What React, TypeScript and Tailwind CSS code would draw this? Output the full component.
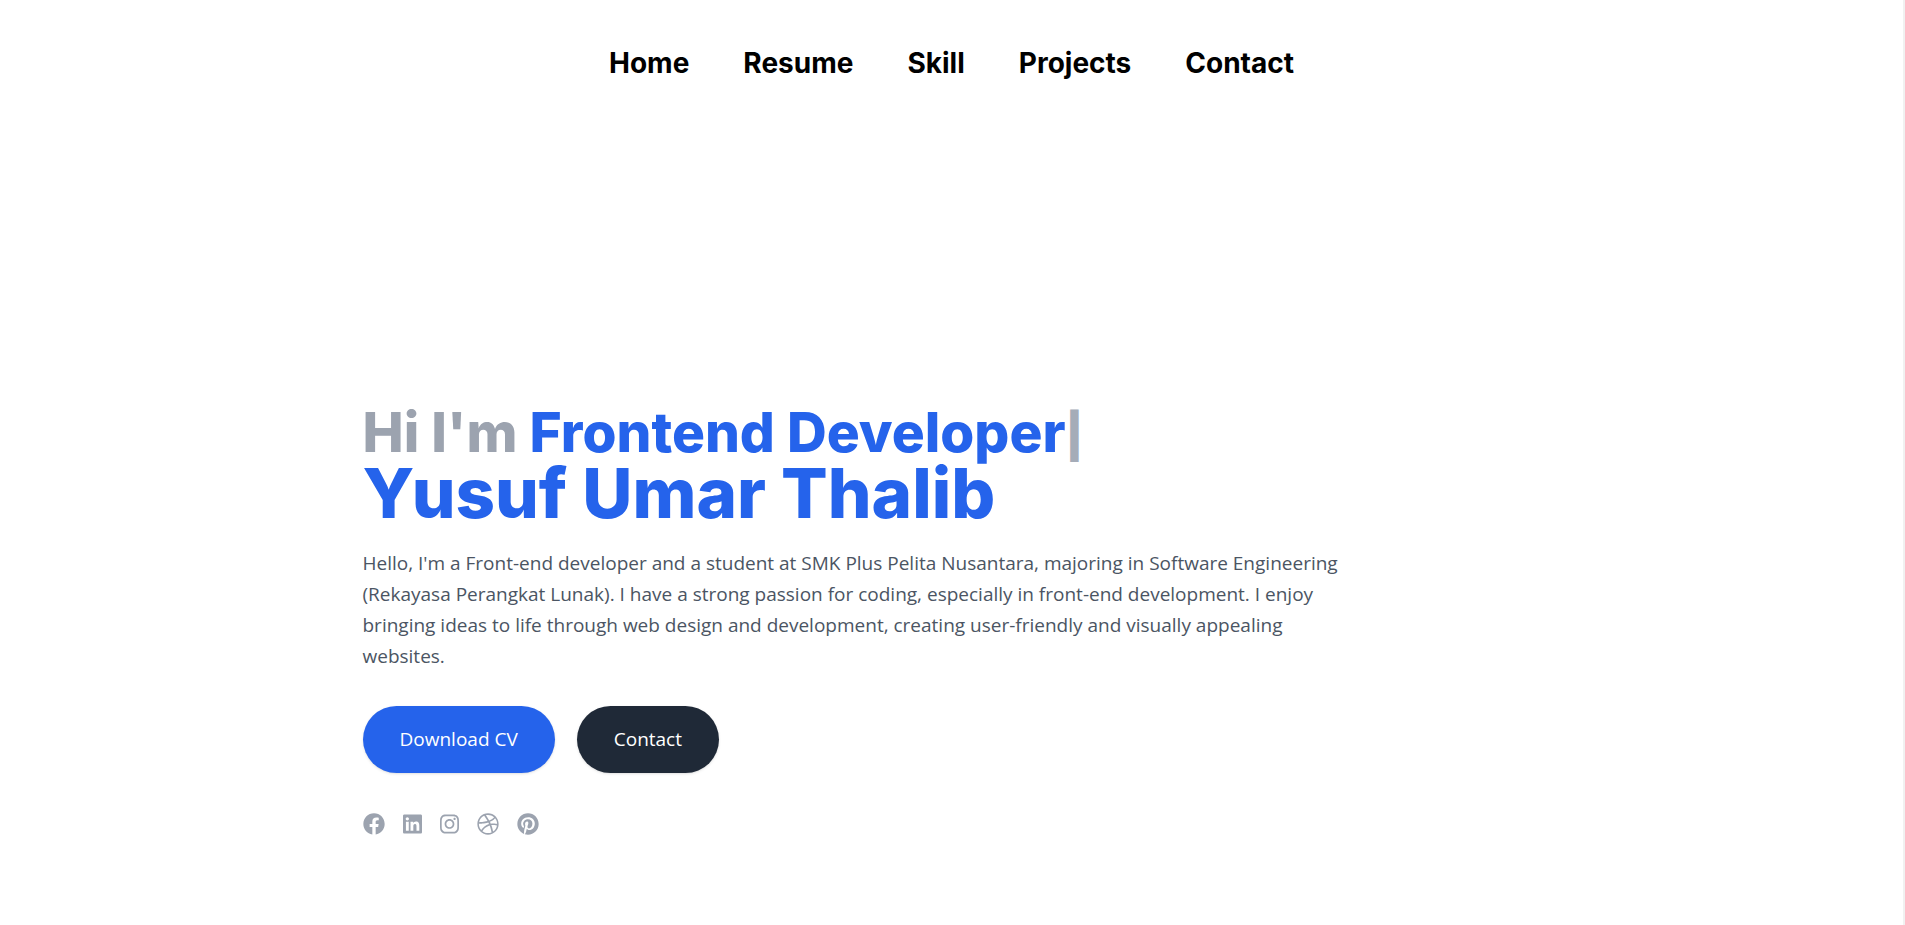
import { FaFacebook, FaLinkedin, FaInstagram, FaDribbble, FaPinterest } from "react-icons/fa";

const links = ["Home", "Resume", "Skill", "Projects", "Contact"];

const socials = [
  { label: "Facebook", Icon: FaFacebook, size: "h-[22px] w-[22px]" },
  { label: "LinkedIn", Icon: FaLinkedin, size: "h-[22px] w-[19px]" },
  { label: "Instagram", Icon: FaInstagram, size: "h-[22px] w-[19px]" },
  { label: "Dribbble", Icon: FaDribbble, size: "h-[22px] w-[22px]" },
  { label: "Pinterest", Icon: FaPinterest, size: "h-[22px] w-[22px]" },
];

export default function App() {
  return (
    <div className="min-h-screen border-r-2 border-[#f1f1f1] bg-white font-['Open_Sans','Noto_Sans',sans-serif]">
      <header className="flex justify-center pt-[45px]">
        <nav aria-label="Main">
          <ul className="flex gap-[54px] font-['Inter',sans-serif] text-[28px] leading-9 font-bold text-black">
            {links.map((link) => (
              <li key={link}>
                <a href={`#${link.toLowerCase()}`}>{link}</a>
              </li>
            ))}
          </ul>
        </nav>
      </header>

      <main className="mx-auto max-w-[1178px] pt-[321px] pb-16">
        <h1 className="font-['Inter',sans-serif] font-extrabold text-[#2563eb]">
          <span className="block text-[55px] leading-[60px]">
            <span className="text-[#9ca3af]">Hi I'm </span>
            Frontend Developer
            <span className="text-[44px] leading-none font-black text-[#a5acb8]">|</span>
          </span>
          <span className="block text-[69px] leading-[62px]">Yusuf Umar Thalib</span>
        </h1>

        <p className="mt-6 max-w-[996px] text-[19px] leading-[31px] text-[#4b5563]">
          Hello, I'm a Front-end developer and a student at SMK Plus Pelita Nusantara, majoring in
          Software Engineering (Rekayasa Perangkat Lunak). I have a strong passion for coding,
          especially in front-end development. I enjoy bringing ideas to life through web design and
          development, creating user-friendly and visually appealing websites.
        </p>

        <div className="mt-[34px] flex gap-[22px] text-[19px] leading-[31px] text-white">
          <a href="#cv" className="rounded-full bg-[#2563eb] px-[37px] py-[18px] shadow-sm">
            Download CV
          </a>
          <a href="#contact" className="rounded-full bg-[#1f2937] px-[37px] py-[18px] shadow-sm">
            Contact
          </a>
        </div>

        <div className="mt-10 flex gap-[18px] text-[#9ca3af]">
          {socials.map(({ label, Icon, size }) => (
            <a key={label} href={`#${label.toLowerCase()}`} aria-label={label}>
              <Icon className={size} />
            </a>
          ))}
        </div>
      </main>
    </div>
  );
}
